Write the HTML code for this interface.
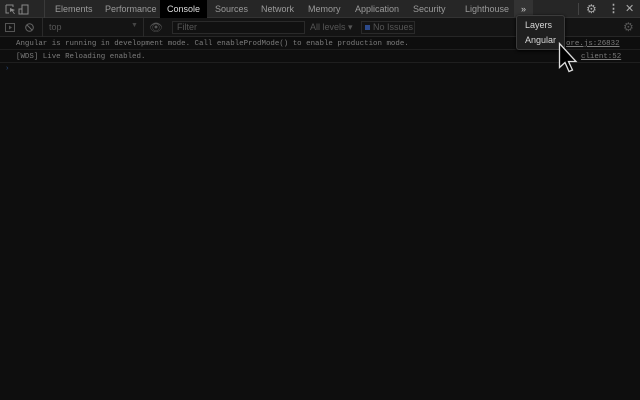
<!DOCTYPE html>
<html><head><style>
*{margin:0;padding:0;box-sizing:border-box}
body{width:640px;height:400px;background:#0e0e0e;overflow:hidden;position:relative;font-family:"Liberation Sans",sans-serif;font-size:9px;color:#a8a8a8}
.tabs{position:absolute;left:0;top:0;width:640px;height:18px;background:#262626;border-bottom:1px solid #333}
.tab{position:absolute;top:0;height:18px;line-height:18px;color:#9a9a9a;font-size:9px}
.tb{position:absolute;left:0;top:18px;width:640px;height:19px;background:#141414;border-bottom:1px solid #262626}
.mono{font-family:"Liberation Mono",monospace;font-size:7.45px;color:#7c7c7c;position:absolute}
.line{position:absolute;left:0;width:640px;border-bottom:1px solid #1f1f1f}
</style></head><body>
<div class="tabs">
<svg style="position:absolute;left:5px;top:4px" width="26" height="11"><path d="M1 1h7v2M1 1v8h3" stroke="#888" fill="none"/><path d="M5 4l5 2-2 1 2 3-1 0-2-3-2 1z" fill="#888"/><rect x="17" y="1" width="6" height="9" stroke="#888" fill="none"/><rect x="14" y="5" width="3" height="5" stroke="#888" fill="none"/></svg>
<div style="position:absolute;left:44px;top:0;width:1px;height:18px;background:#3a3a3a"></div>
<div class="tab" style="left:55px">Elements</div>
<div class="tab" style="left:105px">Performance</div>
<div class="tab" style="left:160px;width:47px;background:#000;color:#ddd;text-align:center">Console</div>
<div class="tab" style="left:215px">Sources</div>
<div class="tab" style="left:261px">Network</div>
<div class="tab" style="left:308px">Memory</div>
<div class="tab" style="left:355px">Application</div>
<div class="tab" style="left:413px">Security</div>
<div class="tab" style="left:465px">Lighthouse</div>
<div class="tab" style="left:514px;width:19px;background:#333;text-align:center;color:#ccc">»</div>
<div style="position:absolute;left:578px;top:3px;width:1px;height:12px;background:#444"></div>
<div class="tab" style="left:586px;color:#aaa;font-size:12px">⚙</div>
<div class="tab" style="left:608px;color:#aaa;font-size:11px;font-weight:bold">⋮</div>
<div class="tab" style="left:625px;color:#aaa;font-size:11px">✕</div>
</div>
<div class="tb">
<svg style="position:absolute;left:5px;top:5px" width="10" height="9"><rect x=".5" y=".5" width="9" height="8" stroke="#555" fill="none"/><path d="M4 2.5l3 2-3 2z" fill="#555"/></svg>
<svg style="position:absolute;left:25px;top:5px" width="9" height="9"><circle cx="4.5" cy="4.5" r="3.8" stroke="#666" fill="none"/><path d="M2 2l5 5" stroke="#666"/></svg>
<div style="position:absolute;left:42px;top:0;width:1px;height:19px;background:#2a2a2a"></div>
<div style="position:absolute;left:49px;top:4px;color:#555">top</div>
<div style="position:absolute;left:131px;top:4px;color:#444;font-size:7px">▼</div>
<div style="position:absolute;left:143px;top:0;width:1px;height:19px;background:#2a2a2a"></div>
<div style="position:absolute;left:149px;top:3px;color:#555;font-size:11px">👁</div>
<div style="position:absolute;left:172px;top:3px;width:133px;height:13px;background:#111;border:1px solid #2a2a2a;color:#555;padding-left:4px;line-height:11px">Filter</div>
<div style="position:absolute;left:310px;top:4px;color:#555">All levels ▾</div>
<div style="position:absolute;left:361px;top:3px;width:54px;height:13px;border:1px solid #2a2a2a;color:#555;line-height:11px;padding-left:3px"><span style="display:inline-block;width:5px;height:5px;background:#2d4a8a;margin-right:3px"></span>No Issues</div>
<div style="position:absolute;left:623px;top:2px;color:#555;font-size:12px">⚙</div>
</div>
<div class="line" style="top:37px;height:13px"></div>
<div class="mono" style="left:16px;top:40px">Angular is running in development mode. Call enableProdMode() to enable production mode.</div>
<div class="mono" style="left:566px;top:40px;text-decoration:underline">ore.js:26832</div>
<div class="line" style="top:50px;height:13px"></div>
<div class="mono" style="left:16px;top:53px">[WDS] Live Reloading enabled.</div>
<div class="mono" style="left:581px;top:53px;text-decoration:underline">client:52</div>
<div class="mono" style="left:5px;top:65px;color:#2a4a7a">›</div>
<div style="position:absolute;left:516px;top:15px;width:49px;height:35px;background:#1f1f1f;border:1px solid #3c3c3c;border-radius:3px;box-shadow:0 1px 3px #000">
<div style="position:absolute;left:8px;top:4px;color:#d8d8d8">Layers</div>
<div style="position:absolute;left:8px;top:19px;color:#d8d8d8">Angular</div>
</div>
<svg style="position:absolute;left:558px;top:42px" width="22" height="34"><path d="M1.5 1.5v24l5.5-5 4 9 3.5-1.5-4-8.5h7.5z" fill="#000" stroke="#ddd" stroke-width="1.3"/></svg>
</body></html>
